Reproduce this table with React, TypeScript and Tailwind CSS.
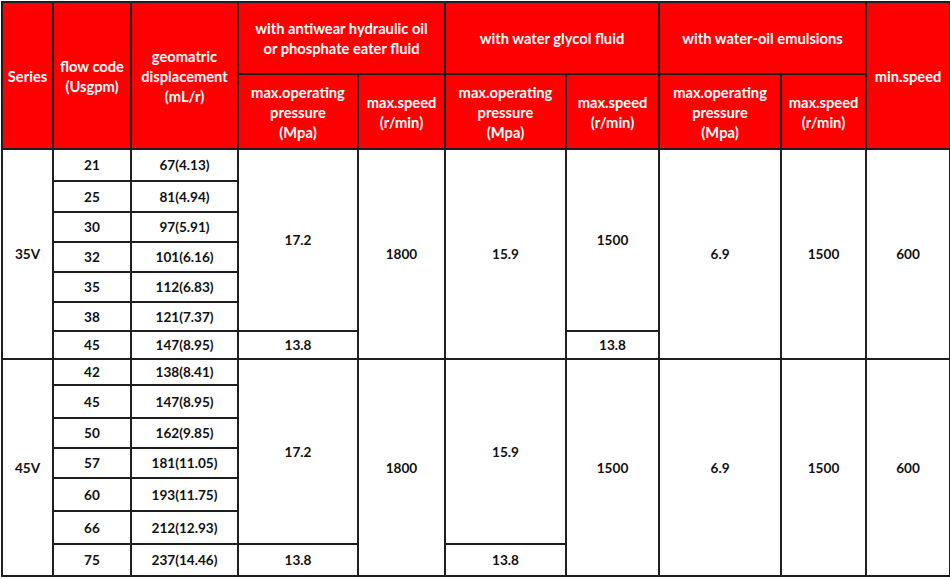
import React from "react";

const B = "border-2 border-[#1e1e1e]";
const H = `${B} bg-[#fe0000] text-white text-center align-middle px-1`;
const C = `${B} bg-white text-[#111] text-center align-middle`;

const rows35 = [
  ["21", "67(4.13)", 32],
  ["25", "81(4.94)", 31],
  ["30", "97(5.91)", 30],
  ["32", "101(6.16)", 30],
  ["35", "112(6.83)", 30],
  ["38", "121(7.37)", 29],
  ["45", "147(8.95)", 28],
] as const;

const rows45 = [
  ["42", "138(8.41)", 26],
  ["45", "147(8.95)", 33],
  ["50", "162(9.85)", 30],
  ["57", "181(11.05)", 30],
  ["60", "193(11.75)", 33],
  ["66", "212(12.93)", 33],
  ["75", "237(14.46)", 32],
] as const;

export default function App() {
  return (
    <div className="w-[950px] h-[579px] bg-white overflow-hidden pt-[1px] pl-[1px]">
      <table
        className="table-fixed border-collapse w-[948px] font-bold leading-[20px]"
        style={{ fontFamily: "Lato, 'Open Sans', sans-serif" }}
      >
        <colgroup>
          <col className="w-[51px]" />
          <col className="w-[78px]" />
          <col className="w-[107px]" />
          <col className="w-[120px]" />
          <col className="w-[87px]" />
          <col className="w-[121px]" />
          <col className="w-[93px]" />
          <col className="w-[122px]" />
          <col className="w-[85px]" />
          <col className="w-[84px]" />
        </colgroup>
        <thead className="text-[14.7px]">
          <tr className="h-[72px]">
            <th rowSpan={2} className={`${H} px-0`}>Series</th>
            <th rowSpan={2} className={H}>flow code<br />(Usgpm)</th>
            <th rowSpan={2} className={H}>geomatric<br />displacement<br />(mL/r)</th>
            <th colSpan={2} className={H}>with antiwear hydraulic oil<br />or phosphate eater fluid</th>
            <th colSpan={2} className={H}>with water glycol fluid</th>
            <th colSpan={2} className={H}>with water-oil emulsions</th>
            <th rowSpan={2} className={H}>min.speed</th>
          </tr>
          <tr className="h-[75px]">
            <th className={H}>max.operating<br />pressure<br />(Mpa)</th>
            <th className={H}>max.speed<br />(r/min)</th>
            <th className={H}>max.operating<br />pressure<br />(Mpa)</th>
            <th className={H}>max.speed<br />(r/min)</th>
            <th className={H}>max.operating<br />pressure<br />(Mpa)</th>
            <th className={H}>max.speed<br />(r/min)</th>
          </tr>
        </thead>
        <tbody className="text-[13.6px]">
          {rows35.map(([f, d, h], i) => (
            <tr key={`a${i}`} style={{ height: h }}>
              {i === 0 && <td rowSpan={7} className={C}>35V</td>}
              <td className={C}>{f}</td>
              <td className={C}>{d}</td>
              {i === 0 && <td rowSpan={6} className={C}>17.2</td>}
              {i === 6 && <td className={C}>13.8</td>}
              {i === 0 && <td rowSpan={7} className={C}>1800</td>}
              {i === 0 && <td rowSpan={7} className={C}>15.9</td>}
              {i === 0 && <td rowSpan={6} className={C}>1500</td>}
              {i === 6 && <td className={C}>13.8</td>}
              {i === 0 && <td rowSpan={7} className={C}>6.9</td>}
              {i === 0 && <td rowSpan={7} className={C}>1500</td>}
              {i === 0 && <td rowSpan={7} className={C}>600</td>}
            </tr>
          ))}
          {rows45.map(([f, d, h], i) => (
            <tr key={`b${i}`} style={{ height: h }}>
              {i === 0 && <td rowSpan={7} className={C}>45V</td>}
              <td className={C}>{f}</td>
              <td className={C}>{d}</td>
              {i === 0 && <td rowSpan={6} className={C}>17.2</td>}
              {i === 6 && <td className={C}>13.8</td>}
              {i === 0 && <td rowSpan={7} className={C}>1800</td>}
              {i === 0 && <td rowSpan={6} className={C}>15.9</td>}
              {i === 6 && <td className={C}>13.8</td>}
              {i === 0 && <td rowSpan={7} className={C}>1500</td>}
              {i === 0 && <td rowSpan={7} className={C}>6.9</td>}
              {i === 0 && <td rowSpan={7} className={C}>1500</td>}
              {i === 0 && <td rowSpan={7} className={C}>600</td>}
            </tr>
          ))}
        </tbody>
      </table>
    </div>
  );
}
